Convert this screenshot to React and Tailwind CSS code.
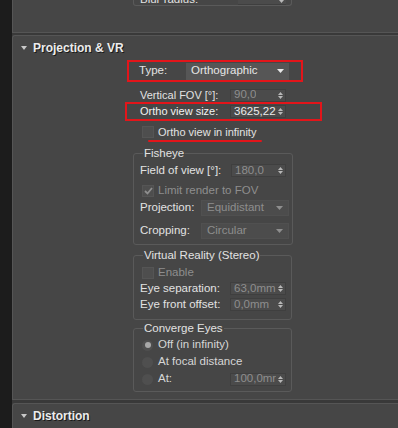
const LABEL = "text-[#e2e2e2]";
const DIM = "text-[#8e8e8e]";

const Arrows = ({ color = "#b8b8b8" }) => (
  <svg width="5" height="9" viewBox="0 0 5 9" className="shrink-0">
    <polygon points="0,4 2.5,1 5,4" fill={color} />
    <polygon points="0,5 2.5,8 5,5" fill={color} />
  </svg>
);

const Spinner = ({ value, bright, w = "w-[56px]" }) => (
  <div className={`flex h-[13px] ${w} items-center justify-between overflow-hidden border border-[#3f3f3f] bg-[#4b4b4b] pl-[3px] pr-[2px]`}>
    <span className={`overflow-hidden whitespace-nowrap text-[11.5px] leading-none ${bright ? "text-[#ececec]" : DIM}`}>{value}</span>
    <Arrows />
  </div>
);

const Dropdown = ({ value, enabled, w, h = "h-[16px]" }) => (
  <div className={`flex ${h} ${w} items-center justify-between px-[5px] ${enabled ? "bg-[#565656]" : "bg-[#4c4c4c] border border-[#505050]"}`}>
    <span className={`text-[11.5px] leading-none ${enabled ? "text-[#e6e6e6]" : DIM}`}>{value}</span>
    <svg width="7" height="4" viewBox="0 0 7 4">
      <polygon points="0,0 7,0 3.5,4" fill={enabled ? "#e8e8e8" : "#8e8e8e"} />
    </svg>
  </div>
);

const Checkbox = ({ checked }) => (
  <div className="flex h-[12px] w-[12px] shrink-0 items-center justify-center border border-[#555] bg-[#4e4e4e]">
    {checked && (
      <svg width="9" height="8" viewBox="0 0 9 8">
        <path d="M1 4 L3.5 6.5 L8 1" stroke="#8e8e8e" strokeWidth="1.8" fill="none" />
      </svg>
    )}
  </div>
);

const Radio = ({ on }) => (
  <div className="flex h-[11px] w-[11px] shrink-0 items-center justify-center rounded-full bg-[#4f4f4f]">
    {on && <div className="h-[6px] w-[6px] rounded-full bg-[#a8a8a8]" />}
  </div>
);

const Header = ({ title }) => (
  <div className="flex h-[24px] items-center">
    <svg width="6" height="4" viewBox="0 0 6 4" className="ml-[8px]">
      <polygon points="0,0 6,0 3,4" fill="#c8c8c8" />
    </svg>
    <span className="ml-[6px] text-[12px] font-bold text-[#ececec] [text-shadow:1px_1px_0_#1a1a1a]">{title}</span>
  </div>
);

const Group = ({ title, className = "", children }) => (
  <fieldset className={`ml-[120px] w-[159px] rounded-[3px] border border-[#5a5a5a] pl-[6px] pr-[3px] ${className}`}>
    <legend className={`ml-[3px] px-[1px] text-[11.5px] leading-[14px] ${LABEL}`}>{title}</legend>
    {children}
  </fieldset>
);

export default function App() {
  return (
    <div className="flex h-[428px] w-[398px] overflow-hidden bg-[#1c1c1c] font-['Liberation_Sans',Arial,sans-serif] text-[11px]">
      <div className="w-[12px] shrink-0 bg-[#1c1c1c]" />
      <div className="flex min-w-0 flex-1 flex-col bg-[#393939]">
        {/* previous rollout, cut at the top */}
        <div className="flex h-[33px] shrink-0 flex-col justify-end border-b border-l border-[#555] bg-[#464646] pb-[26px]">
          <div className="ml-[120px] flex h-[12px] w-[159px] items-end justify-between rounded-b-[3px] border-x border-b border-[#5a5a5a] pl-[6px] pr-[5px]">
            <span className={`text-[11.5px] leading-none ${LABEL}`}>Blur radius:</span>
            <div className="flex h-[9px] w-[48px] items-end justify-end border-b border-[#3f3f3f] bg-[#4b4b4b] pr-[2px]">
              <Arrows />
            </div>
          </div>
        </div>

        {/* Projection & VR */}
        <div className="mt-[2px] flex h-[365px] shrink-0 flex-col rounded-tl-[3px] border-y border-l border-[#555] bg-[#464646]">
          <Header title="Projection & VR" />

          <div className="ml-[114px] flex h-[22px] w-[176px] items-center border-2 border-[#e3151a] pl-[10px]">
            <span className={`w-[47px] text-[11.5px] ${LABEL}`}>Type:</span>
            <Dropdown value="Orthographic" enabled w="w-[103px]" h="h-[17px]" />
          </div>

          <div className="ml-[127px] mt-[6px] flex h-[14px] items-center">
            <span className={`w-[90px] ${LABEL}`}>Vertical FOV [°]:</span>
            <Spinner value="90,0" />
          </div>

          <div className="ml-[112px] flex h-[19px] w-[197px] items-center border-2 border-[#e3151a] pl-[13px]">
            <span className="w-[90px] text-[#f2f2f2]">Ortho view size:</span>
            <Spinner value="3625,22" bright />
          </div>

          <div className="ml-[129px] mt-[5px] flex h-[12px] items-center gap-[4px]">
            <Checkbox />
            <span className={LABEL}>Ortho view in infinity</span>
          </div>
          <div className="ml-[135px] mt-[2px] h-[2px] w-[114px] rounded-full bg-[#e3151a]" />

          <Group title="Fisheye" className="mt-[4px] pb-[5px]">
            <div className="mt-[3px] flex h-[15px] items-center">
              <span className={`w-[91px] text-[11.5px] ${LABEL}`}>Field of view [°]:</span>
              <Spinner value="180,0" w="w-[55px]" />
            </div>
            <div className="ml-[2px] mt-[7px] flex h-[12px] items-center gap-[4px]">
              <Checkbox checked />
              <span className={`text-[11.5px] ${DIM}`}>Limit render to FOV</span>
            </div>
            <div className="mt-[3px] flex h-[16px] items-center">
              <span className={`w-[61px] text-[11.5px] ${LABEL}`}>Projection:</span>
              <Dropdown value="Equidistant" w="w-[88px]" />
            </div>
            <div className="mt-[7px] flex h-[16px] items-center">
              <span className={`w-[61px] text-[11.5px] ${LABEL}`}>Cropping:</span>
              <Dropdown value="Circular" w="w-[88px]" />
            </div>
          </Group>

          <Group title="Virtual Reality (Stereo)" className="mt-[3px] pb-[8px]">
            <div className="ml-[2px] mt-[5px] flex h-[12px] items-center gap-[4px]">
              <Checkbox />
              <span className={`text-[11.5px] ${DIM}`}>Enable</span>
            </div>
            <div className="mt-[3px] flex h-[13px] items-center">
              <span className={`w-[90px] text-[11.5px] ${LABEL}`}>Eye separation:</span>
              <Spinner value="63,0mm" />
            </div>
            <div className="mt-[3px] flex h-[13px] items-center">
              <span className={`w-[90px] text-[11.5px] ${LABEL}`}>Eye front offset:</span>
              <Spinner value="0,0mm" />
            </div>
          </Group>

          <Group title="Converge Eyes" className="mt-[1px] pb-[6px]">
            <div className="ml-[2px] mt-[4px] flex h-[12px] items-center gap-[5px]">
              <Radio on />
              <span className="text-[11.5px] text-[#d6d6d6]">Off (in infinity)</span>
            </div>
            <div className="ml-[2px] mt-[5px] flex h-[12px] items-center gap-[5px]">
              <Radio />
              <span className="text-[11.5px] text-[#d6d6d6]">At focal distance</span>
            </div>
            <div className="ml-[2px] mt-[5px] flex h-[12px] items-center">
              <Radio />
              <span className="ml-[5px] w-[72px] text-[11.5px] text-[#d6d6d6]">At:</span>
              <Spinner value="100,0mr" w="w-[56px]" />
            </div>
          </Group>
        </div>

        {/* Distortion */}
        <div className="mt-[3px] flex flex-1 flex-col rounded-tl-[3px] border-l border-t border-[#555] bg-[#464646]">
          <Header title="Distortion" />
        </div>
      </div>
    </div>
  );
}
